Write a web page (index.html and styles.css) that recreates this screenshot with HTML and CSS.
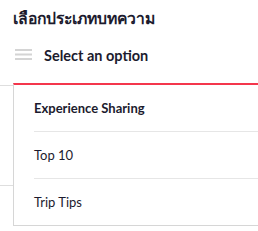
FILE: index.html
```html
<!DOCTYPE html>
<html lang="th">
<head>
<meta charset="utf-8">
<link rel="stylesheet" href="styles.css">
</head>
<body>
<div class="page">
  <div class="label">เลือกประเภทบทความ</div>
  <div class="select">
    <svg class="burger" width="17" height="12" viewBox="0 0 17 12">
      <rect x="0" y="0" width="17" height="2" fill="#d4d4d4"/>
      <rect x="0" y="4.5" width="17" height="2" fill="#d4d4d4"/>
      <rect x="0" y="9" width="17" height="2" fill="#d4d4d4"/>
    </svg>
    <span class="select-text">Select an option</span>
  </div>
  <div class="under">
    <div class="under-row"></div>
    <div class="under-row"></div>
  </div>
  <ul class="menu">
    <li class="item active">Experience Sharing</li>
    <li class="item">Top 10</li>
    <li class="item">Trip Tips</li>
  </ul>
</div>
</body>
</html>
```
FILE: styles.css
```css
html, body {
  margin: 0;
  padding: 0;
  background: #fff;
  overflow: hidden;
}
.page {
  position: relative;
  width: 258px;
  height: 231px;
  overflow: hidden;
  font-family: "Lato", "Noto Sans", sans-serif;
  color: #1c1b2e;
}
.label {
  padding: 9px 0 0 13px;
  height: 22px;
  font-size: 15.7px;
  font-weight: 600;
  line-height: 18px;
  font-family: "Noto Sans", "Lato", sans-serif;
}
.select {
  display: flex;
  align-items: center;
  height: 38px;
  margin-top: 5px;
  padding-left: 15px;
  gap: 12px;
}
.select-text {
  font-size: 14.5px;
  font-weight: 700;
}
.under {
  margin-top: 11px;
}
.under-row {
  height: 99px;
  border-top: 1px solid #dedede;
}
.menu {
  position: absolute;
  left: 13px;
  top: 83px;
  width: 260px;
  margin: 0;
  padding: 0 0 0 20px;
  list-style: none;
  background: #fff;
  border-top: 2px solid #f4364c;
  border-left: 1px solid #d6d6d6;
  border-bottom: 1px solid #d6d6d6;
}
.item {
  height: 46px;
  line-height: 46px;
  font-size: 13px;
  border-top: 1px solid #e6e6e6;
}
.item:first-child {
  border-top: none;
}
.active {
  font-weight: 700;
}
```
